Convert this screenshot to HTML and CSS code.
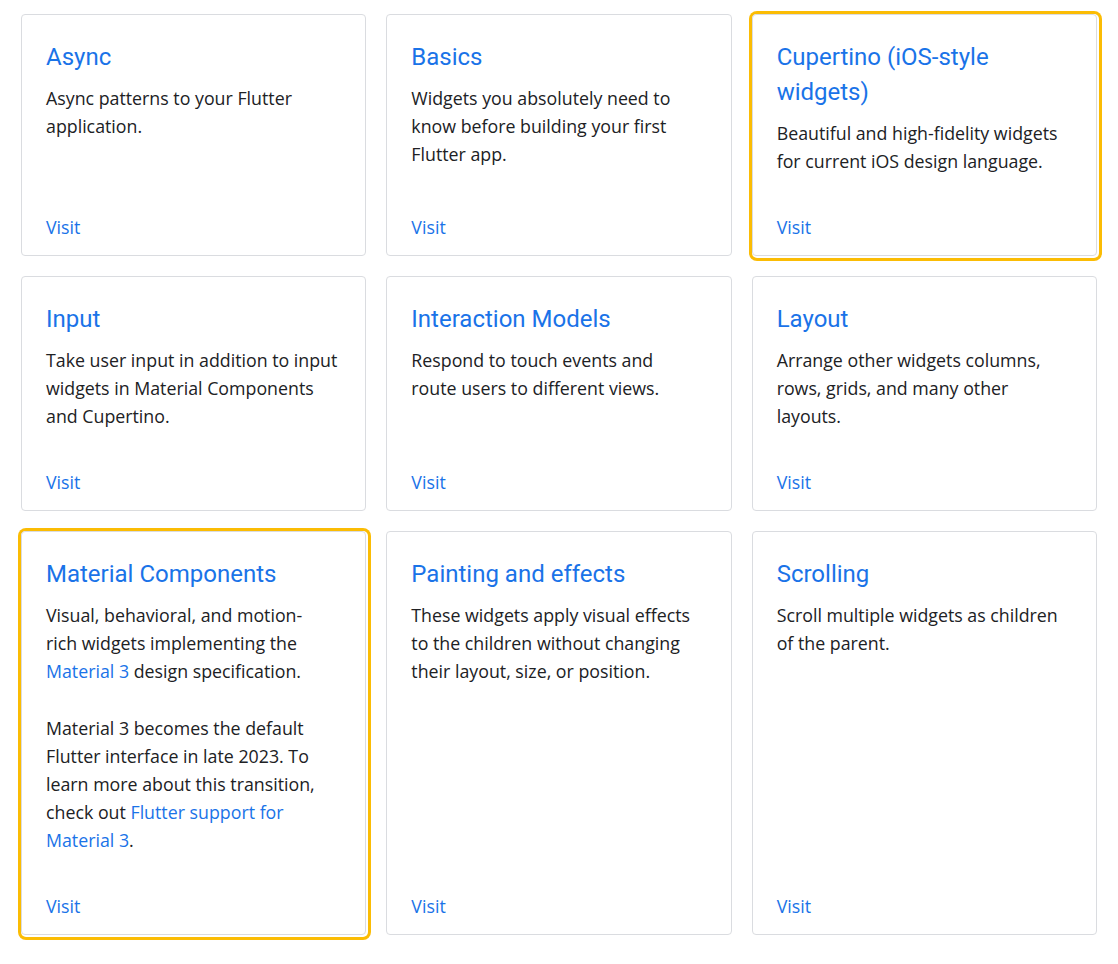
FILE: index.html
```html
<!DOCTYPE html>
<html lang="en">
<head>
<meta charset="utf-8">
<title>Widget catalog</title>
<link rel="stylesheet" href="styles.css">
</head>
<body>
<div class="grid">
  <div class="card">
    <h3 class="title">Async</h3>
    <p class="desc">Async patterns to your Flutter application.</p>
    <a class="visit" href="#">Visit</a>
  </div>
  <div class="card">
    <h3 class="title">Basics</h3>
    <p class="desc">Widgets you absolutely need to know before building your first Flutter app.</p>
    <a class="visit" href="#">Visit</a>
  </div>
  <div class="card highlight">
    <h3 class="title">Cupertino (iOS-style widgets)</h3>
    <p class="desc">Beautiful and high-fidelity widgets for current iOS design language.</p>
    <a class="visit" href="#">Visit</a>
  </div>
  <div class="card">
    <h3 class="title">Input</h3>
    <p class="desc">Take user input in addition to input widgets in Material Components and Cupertino.</p>
    <a class="visit" href="#">Visit</a>
  </div>
  <div class="card">
    <h3 class="title">Interaction Models</h3>
    <p class="desc">Respond to touch events and<br>route users to different views.</p>
    <a class="visit" href="#">Visit</a>
  </div>
  <div class="card">
    <h3 class="title">Layout</h3>
    <p class="desc">Arrange other widgets columns, rows, grids, and many other layouts.</p>
    <a class="visit" href="#">Visit</a>
  </div>
  <div class="card highlight">
    <h3 class="title">Material Components</h3>
    <p class="desc">Visual, behavioral, and motion-<br>rich widgets implementing the <a class="link" href="#">Material 3</a> design specification.</p>
    <p class="desc">Material 3 becomes the default Flutter interface in late 2023. To learn more about this transition, check out <a class="link" href="#">Flutter support for Material 3</a>.</p>
    <a class="visit" href="#">Visit</a>
  </div>
  <div class="card">
    <h3 class="title">Painting and effects</h3>
    <p class="desc">These widgets apply visual effects to the children without changing their layout, size, or position.</p>
    <a class="visit" href="#">Visit</a>
  </div>
  <div class="card">
    <h3 class="title">Scrolling</h3>
    <p class="desc">Scroll multiple widgets as children of the parent.</p>
    <a class="visit" href="#">Visit</a>
  </div>
</div>
</body>
</html>
```

FILE: styles.css
```css
html, body {
  margin: 0;
  padding: 0;
  background: #ffffff;
}

body {
  font-family: "Open Sans", Roboto, "Liberation Sans", sans-serif;
  color: #202124;
}

.grid {
  display: grid;
  grid-template-columns: repeat(3, 1fr);
  gap: 20px;
  padding: 14px 21px 28px 21px;
}

.card {
  display: flex;
  flex-direction: column;
  border: 1px solid #dadce0;
  border-radius: 4px;
  padding: 25px 24px 14px 24px;
  background: #fff;
}

.highlight {
  box-shadow: 1px 1px 0 1px #ffffff, 1px 1px 0 4px #fbbc04;
}

.title {
  margin: 0 0 9px 0;
  font-family: Roboto, "Open Sans", sans-serif;
  font-size: 24px;
  font-weight: 400;
  line-height: 35px;
  color: #1a73e8;
}

.desc {
  margin: 0;
  font-size: 17.8px;
  line-height: 28px;
  color: #202124;
}

.desc + .desc {
  margin-top: 29px;
}

.link {
  color: #1a73e8;
  text-decoration: none;
}

.visit {
  margin-top: auto;
  padding-top: 38px;
  font-size: 17.8px;
  line-height: 28px;
  color: #1a73e8;
  text-decoration: none;
}
```
